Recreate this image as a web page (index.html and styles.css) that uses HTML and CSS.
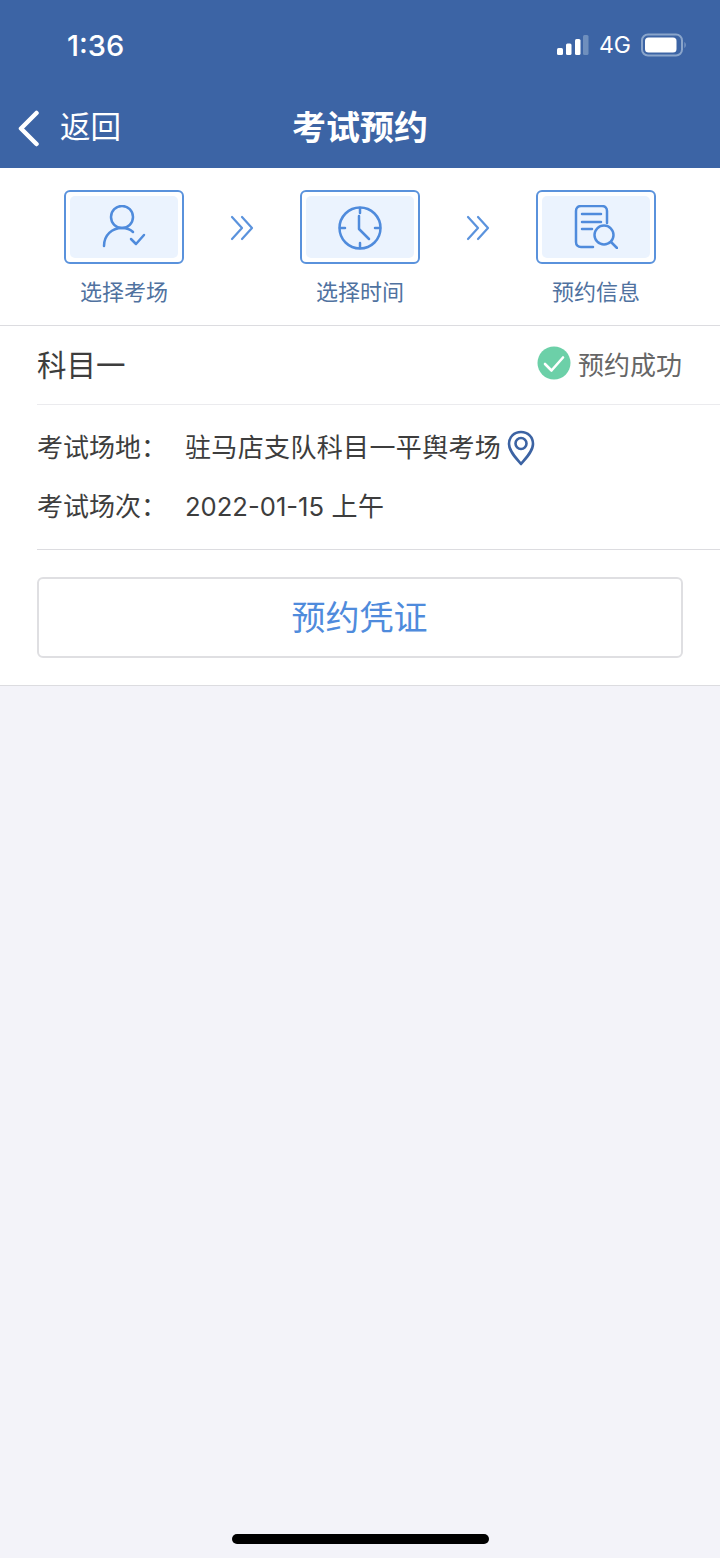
FILE: index.html
```html
<!DOCTYPE html>
<html lang="zh-CN">
<head>
  <meta charset="UTF-8">
  <meta name="viewport" content="width=device-width, initial-scale=1.0">
  <title>考试预约</title>
  <link rel="stylesheet" href="styles.css">
</head>
<body>
  <header class="top-bar">
    <div class="status-bar">
      <span class="time">1:36</span>
      <div class="status-icons">
        <svg class="signal" width="32" height="22" viewBox="0 0 32 22">
          <rect x="0" y="14" width="6" height="7" rx="1.5" fill="#fff"/>
          <rect x="9" y="9.5" width="5.5" height="11.5" rx="1.5" fill="#fff"/>
          <rect x="18" y="5" width="5.5" height="16" rx="1.5" fill="#fff"/>
          <rect x="26" y="1" width="5.5" height="20" rx="1.5" fill="#6f8fbd"/>
        </svg>
        <span class="network">4G</span>
        <svg class="battery" width="46" height="24" viewBox="0 0 46 24">
          <rect x="1" y="1.5" width="40" height="21" rx="6" fill="none" stroke="#8aa5cb" stroke-width="2"/>
          <rect x="4" y="4.5" width="31.5" height="15" rx="3.5" fill="#fff"/>
          <path d="M43.5 9 C45 10 45 14 43.5 15 Z" fill="#8aa5cb"/>
        </svg>
      </div>
    </div>
    <div class="nav-bar">
      <div class="back">
        <svg width="24" height="38" viewBox="0 0 24 38">
          <path d="M19.5 4 L4 19.5 L19.5 35" fill="none" stroke="#fff" stroke-width="4.5" stroke-linecap="round" stroke-linejoin="round"/>
        </svg>
        <span class="back-text">返回</span>
      </div>
      <h1 class="title">考试预约</h1>
    </div>
  </header>

  <section class="steps">
    <div class="step">
      <div class="step-box">
        <div class="step-inner">
          <svg width="44" height="44" viewBox="0 0 44 44" fill="none" stroke="#4f8bdc" stroke-width="2.5" stroke-linecap="round" stroke-linejoin="round">
            <circle cx="20" cy="12" r="11"/>
            <path d="M2 41 C2 30 10 23 20 23 C24 23 28 24 31 27"/>
            <path d="M29 34 L34 39 L42 30"/>
          </svg>
        </div>
      </div>
      <span class="step-label">选择考场</span>
    </div>
    <svg class="arrow" width="24" height="26" viewBox="0 0 24 26" fill="none" stroke="#5b93dd" stroke-width="2.2" stroke-linecap="round" stroke-linejoin="round">
      <path d="M2 2 L12 13 L2 24"/>
      <path d="M12 2 L22 13 L12 24"/>
    </svg>
    <div class="step">
      <div class="step-box">
        <div class="step-inner">
          <svg class="clock" width="44" height="44" viewBox="0 0 44 44" fill="none" stroke="#4f8bdc" stroke-width="2.5" stroke-linecap="round" stroke-linejoin="round">
            <circle cx="22" cy="22" r="20.5"/>
            <path d="M22 2 V7 M22 37 V42 M2 22 H7 M37 22 H42"/>
            <path d="M21 10 V23 L31 33"/>
          </svg>
        </div>
      </div>
      <span class="step-label">选择时间</span>
    </div>
    <svg class="arrow" width="24" height="26" viewBox="0 0 24 26" fill="none" stroke="#5b93dd" stroke-width="2.2" stroke-linecap="round" stroke-linejoin="round">
      <path d="M2 2 L12 13 L2 24"/>
      <path d="M12 2 L22 13 L12 24"/>
    </svg>
    <div class="step">
      <div class="step-box">
        <div class="step-inner">
          <svg width="44" height="44" viewBox="0 0 44 44" fill="none" stroke="#4f8bdc" stroke-width="2.5" stroke-linecap="round" stroke-linejoin="round">
            <path d="M19 42 H7 C4 42 2 40 2 37 V6 C2 3 4 1 7 1 H28 C31 1 33 3 33 6 V18"/>
            <path d="M8 9 H27 M8 17 H27 M8 24 H18"/>
            <circle cx="30" cy="30" r="9.5"/>
            <path d="M37 37 L43 43"/>
          </svg>
        </div>
      </div>
      <span class="step-label">预约信息</span>
    </div>
  </section>

  <section class="card">
    <div class="card-head">
      <span class="subject">科目一</span>
      <div class="state">
        <svg width="34" height="34" viewBox="0 0 34 34">
          <circle cx="17" cy="17" r="16.5" fill="#6cd0a8"/>
          <path d="M8 18 L14.5 24.5 L26 11.5" fill="none" stroke="#fff" stroke-width="2.6" stroke-linecap="round" stroke-linejoin="round"/>
        </svg>
        <span>预约成功</span>
      </div>
    </div>
    <div class="info">
      <div class="info-row">
        <span class="info-label">考试场地：</span>
        <span class="info-value">驻马店支队科目一平舆考场</span>
        <svg class="pin" width="28" height="36" viewBox="0 0 28 36" fill="none" stroke="#3c63a3" stroke-width="2.6">
          <path d="M14 34 C9 28 2 21 2 14 C2 7 7 2 14 2 C21 2 26 7 26 14 C26 21 19 28 14 34 Z" stroke-linejoin="round"/>
          <circle cx="14" cy="13.5" r="5.5"/>
        </svg>
      </div>
      <div class="info-row">
        <span class="info-label">考试场次：</span>
        <span class="info-value"><span class="date">2022-01-15</span> 上午</span>
      </div>
    </div>
    <div class="action">
      <button class="voucher-btn">预约凭证</button>
    </div>
  </section>

  <div class="home-indicator"></div>
</body>
</html>
```

FILE: styles.css
```css
html, body {
  margin: 0;
  padding: 0;
}

body {
  width: 720px;
  height: 1558px;
  position: relative;
  overflow: hidden;
  background-color: #f3f3f9;
  font-family: "Liberation Sans", "Noto Sans CJK SC", sans-serif;
  color: #3d3d3d;
}

.top-bar {
  height: 168px;
  background-color: #3c64a5;
  color: #fff;
}

.status-bar {
  height: 90px;
  display: flex;
  justify-content: space-between;
  align-items: center;
  padding: 0 33px 0 67px;
  box-sizing: border-box;
}

.time {
  font-family: Inter, "Liberation Sans", sans-serif;
  font-size: 29px;
  font-weight: 500;
}

.status-icons {
  display: flex;
  align-items: center;
}

.signal {
  margin-right: 10px;
}

.network {
  font-family: Inter, "Liberation Sans", sans-serif;
  font-size: 23px;
  margin-right: 10px;
}

.nav-bar {
  height: 74px;
  position: relative;
  display: flex;
  justify-content: center;
  align-items: center;
  padding-bottom: 4px;
  box-sizing: border-box;
}

.back {
  position: absolute;
  left: 17px;
  top: 18px;
  display: flex;
  align-items: center;
  gap: 19px;
}

.back-text {
  font-size: 30.5px;
  margin-top: -5px;
}

.title {
  margin: 0;
  font-size: 34px;
  font-weight: 700;
}

.steps {
  height: 135px;
  background-color: #fff;
  border-bottom: 1px solid #dcdce0;
  display: flex;
  justify-content: center;
  align-items: flex-start;
  gap: 46px;
  padding-top: 22px;
}

.step {
  display: flex;
  flex-direction: column;
  align-items: center;
  width: 120px;
}

.step-box {
  width: 120px;
  height: 74px;
  box-sizing: border-box;
  border: 2px solid #5a92dc;
  border-radius: 6px;
  padding: 4px;
}

.step-inner {
  height: 100%;
  background-color: #ebf3fe;
  border-radius: 5px;
  display: flex;
  justify-content: center;
  align-items: center;
}

.clock {
  margin-top: 2px;
}

.step-label {
  margin-top: 14px;
  font-size: 22px;
  line-height: 30px;
  color: #50729f;
}

.arrow {
  margin-top: 25px;
  flex-shrink: 0;
}

.card {
  background-color: #fff;
  border-bottom: 1px solid #dcdce0;
  padding-left: 37px;
}

.card-head {
  height: 74px;
  padding-bottom: 4px;
  display: flex;
  justify-content: space-between;
  align-items: center;
  padding-right: 38px;
  border-bottom: 1px solid #ebebee;
}

.subject {
  font-size: 29.5px;
}

.state {
  display: flex;
  align-items: center;
  gap: 7px;
  font-size: 26px;
  color: #666;
}

.info {
  height: 145px;
  box-sizing: border-box;
  padding-top: 11px;
  border-bottom: 1px solid #dcdce0;
}

.info-row {
  height: 59px;
  display: flex;
  align-items: center;
  font-size: 26px;
}

.info-label {
  width: 148px;
  flex-shrink: 0;
}

.info-value {
  letter-spacing: 0.35px;
}

.date {
  font-family: Inter, "Liberation Sans", sans-serif;
  font-size: 25.6px;
  letter-spacing: 0;
}

.pin {
  margin-left: 6px;
  margin-top: 4px;
}

.action {
  height: 135px;
  box-sizing: border-box;
  padding: 27px 37px 27px 0;
}

.voucher-btn {
  display: block;
  width: 100%;
  height: 81px;
  padding: 0 1px 4px 0;
  background-color: #fff;
  border: 2px solid #dfdfe2;
  border-radius: 6px;
  font-family: inherit;
  font-size: 34px;
  color: #4f8bdc;
}

.home-indicator {
  position: absolute;
  left: 232px;
  bottom: 14px;
  width: 257px;
  height: 10px;
  border-radius: 5px;
  background-color: #000;
}
```
